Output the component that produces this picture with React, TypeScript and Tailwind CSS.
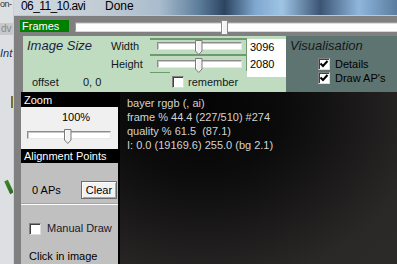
import React from "react";

const Check = ({ checked = false }: { checked?: boolean }) => (
    <span className="inline-flex w-[12px] h-[12px] shrink-0 items-center justify-center bg-white border border-t-[#808080] border-l-[#808080] border-b-[#dcdcdc] border-r-[#dcdcdc] shadow-[inset_1px_1px_0_#404040]">
        {checked && (
            <svg width="10" height="10" viewBox="0 0 10 10">
                <polyline points="1.5,4.5 4,7 8.5,2" fill="none" stroke="#000" strokeWidth="2" />
            </svg>
        )}
    </span>
);

const Thumb = () => (
    <svg width="8" height="15" viewBox="0 0 8 15">
        <path d="M0.5 0.5 H7 V11 L3.75 14.5 L0.5 11 Z" fill="#f2f2f2" stroke="#7a7a7a" />
        <path d="M1.5 1.5 V10.5" stroke="#ffffff" />
    </svg>
);

const Track = ({ width, left }: { width: string; left: string }) => (
    <div className={`relative ${width} h-[8px] bg-white border border-t-[#8c8c8c] border-l-[#8c8c8c] border-b-[#e8e8e8] border-r-[#e8e8e8] shadow-[inset_1px_1px_0_#c8c8c8]`}>
        <div className={`absolute ${left} -top-[3px]`}>
            <Thumb />
        </div>
    </div>
);

export default function App() {
    return (
        <div className="w-[397px] h-[264px] overflow-hidden flex font-['Liberation_Sans',Arial,sans-serif] bg-[#808080]">
            {/* window behind */}
            <div className="w-[13px] shrink-0 bg-[#dde0e3] flex flex-col overflow-hidden text-[11px] leading-none">
                <span className="text-[9px] tracking-[-0.5px] text-[#333] whitespace-nowrap">on-</span>
                <div className="mt-[14px] h-[12px] bg-[#c6c8cb] text-[#8a8a8a] text-[10px] pl-[1px] leading-[12px] whitespace-nowrap">dv</div>
                <span className="mt-[13px] text-[11px] italic text-[#2a2f5a] whitespace-nowrap">Int</span>
                <div className="mt-[37px] ml-[11px] w-[2px] h-[12px] bg-[#7a7330]" />
                <div className="mt-[72px] ml-[7px] w-[4px] h-[14px] bg-[linear-gradient(160deg,#3c8a2c,#2b6a20)] rotate-[-25deg]" />
            </div>
            <div className="w-px shrink-0 bg-[#b9d5ef]" />

            {/* main window */}
            <div className="flex-1 min-w-0 flex flex-col">
                <div className="h-[16px] shrink-0 overflow-hidden border-b border-[#a9cdeb] bg-[linear-gradient(90deg,#d2d9df_0%,#c2ccd5_22%,#a9bccd_38%,#5f7f9e_48%,#2c4460_55%,#7fa8cf_63%,#9fc4e4_70%,#3b5474_80%,#8fb7dc_90%,#5a7c9f_100%)] flex items-start pl-[7px] text-[12px] leading-none text-black">
                    <span className="tracking-[-0.6px]">06_11_10.avi</span>
                    <span className="ml-[20px]">Done</span>
                </div>

                <div className="flex-1 flex flex-col pt-[4px] pl-[6px] bg-[#808080]">
                    {/* frames */}
                    <div className="h-[12px] flex items-stretch">
                        <div className="w-[49px] bg-[#008000] text-white text-[11px] leading-[12px] pl-[2px]">Frames</div>
                        <div className="flex-1 ml-[6px] mt-[2px] relative h-[10px] bg-white border border-t-[#9a9a9a] border-l-[#9a9a9a] border-b-[#d8d8d8] border-r-0 shadow-[inset_0_1px_0_#dedede]">
                            <div className="absolute left-[145px] -top-[3px] w-[7px] h-[15px] bg-[#f4f4f4] border border-[#8a8a8a] rounded-[1px] shadow-[inset_1px_0_0_#fff]" />
                        </div>
                    </div>

                    {/* panels */}
                    <div className="mt-[4px] h-[56px] flex pl-[3px]">
                        <div className="w-[263px] bg-[#c0dcc0] flex text-[11px] text-[#101820]">
                            <div className="w-[88px] flex flex-col justify-between pl-[4px] pt-[2px] pb-[4px]">
                                <span className="text-[13px] italic text-[#1c1f44] leading-[15px]">Image Size</span>
                                <div className="flex pl-[5px] leading-[12px]">
                                    <span className="w-[51px]">offset</span>
                                    <span>0, 0</span>
                                </div>
                            </div>
                            <div className="w-[39px] flex flex-col pt-[4px] leading-[12px]">
                                <span>Width</span>
                                <span className="mt-[6px]">Height</span>
                            </div>
                            <div className="w-[97px] flex flex-col pt-[2px]">
                                <div className="h-[16px] border-t-2 border-r border-[#6f9a6f] pl-[7px] pt-[2px]">
                                    <Track width="w-[85px]" left="left-[37px]" />
                                </div>
                                <div className="h-[17px] border-t-2 border-r border-[#6f9a6f] pl-[7px] pt-[4px]">
                                    <Track width="w-[85px]" left="left-[37px]" />
                                </div>
                                <div className="mt-px w-[20px] h-px bg-[#6f9a6f]" />
                                <div className="mt-[3px] pl-[22px] flex items-center gap-[4px] leading-[12px]">
                                    <Check />
                                    <span>remember</span>
                                </div>
                            </div>
                            <div className="w-[39px] h-[38px] mt-[3px] bg-white pl-[3px] leading-[17px] text-black">
                                <div>3096</div>
                                <div>2080</div>
                            </div>
                        </div>
                        <div className="flex-1 bg-[#5e7470] pl-[4px] pt-[2px] text-[11px] text-black">
                            <div className="text-[13px] italic leading-[15px] text-[#15181c]">Visualisation</div>
                            <div className="mt-[4px] pl-[28px] flex flex-col">
                                <div className="h-[14px] flex items-center gap-[5px]">
                                    <Check checked />
                                    <span>Details</span>
                                </div>
                                <div className="h-[14px] flex items-center gap-[5px]">
                                    <Check checked />
                                    <span>Draw AP's</span>
                                </div>
                            </div>
                        </div>
                    </div>

                    {/* lower area */}
                    <div className="flex-1 ml-[1px] flex bg-black">
                        <div className="w-[97px] mt-[2px] flex flex-col text-[11px]">
                            <div className="h-[13px] bg-black text-white pl-[3px] leading-[13px]">Zoom</div>
                            <div className="h-[42px] bg-[#f0f0f0] pt-[4px] text-black">
                                <div className="pl-[41px] leading-[13px]">100%</div>
                                <div className="mt-[7px] ml-[6px]">
                                    <Track width="w-[84px]" left="left-[36px]" />
                                </div>
                            </div>
                            <div className="h-[14px] bg-black text-white pl-[3px] leading-[14px]">Alignment Points</div>
                            <div className="flex-1 bg-[#c0c0c0] pt-[18px] text-black">
                                <div className="flex items-center justify-between pl-[11px] pr-[1px]">
                                    <span>0 APs</span>
                                    <button type="button" className="w-[36px] h-[18px] bg-[#f2f2f2] border border-[#6e6e6e] shadow-[inset_1px_1px_0_#ffffff,inset_-1px_-1px_0_#a8a8a8] text-[11px] leading-none">
                                        Clear
                                    </button>
                                </div>
                                <div className="mt-[4px] h-[2px] border-t border-[#a4a4a4] bg-white" />
                                <div className="mt-[17px] pl-[8px] flex items-center gap-[6px] leading-[13px]">
                                    <Check />
                                    <span className="text-[#1a1a28]">Manual Draw</span>
                                </div>
                                <div className="mt-[15px] pl-[8px] leading-[13px] whitespace-nowrap">Click in image</div>
                            </div>
                        </div>
                        <div className="flex-1 ml-[2px] pt-[4px] pl-[7px] bg-[radial-gradient(ellipse_at_30%_8%,#040405_0%,#0b0b0c_30%,#1c1a1a_58%,#2a2727_80%,#2d2a2a_100%)] text-[11px] leading-[14px] text-[#d2d2d2] whitespace-pre">
                            <div>bayer rggb (, ai)</div>
                            <div>frame % 44.4 (227/510) #274</div>
                            <div>quality % 61.5  (87.1)</div>
                            <div>I: 0.0 (19169.6) 255.0 (bg 2.1)</div>
                        </div>
                    </div>
                </div>
            </div>
        </div>
    );
}
